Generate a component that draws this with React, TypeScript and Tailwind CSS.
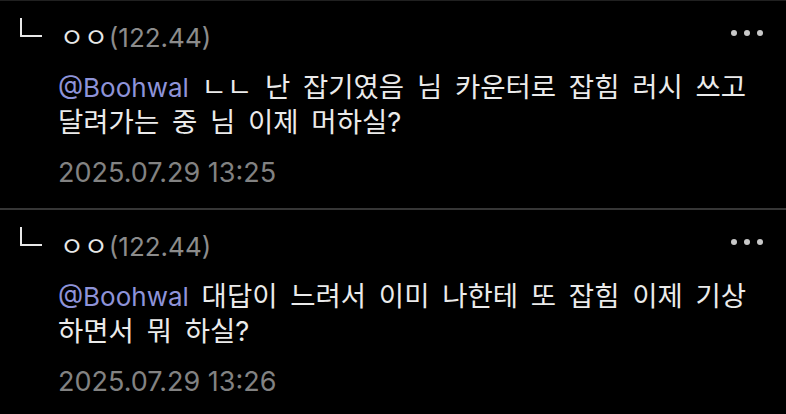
import React from "react";

const font = { fontFamily: '"Inter", "Noto Sans CJK KR", sans-serif' };

function Dots() {
  return (
    <div className="flex items-center gap-[7px]">
      <span className="block w-[6px] h-[6px] rounded-full bg-[#c8c8c8]" />
      <span className="block w-[6px] h-[6px] rounded-full bg-[#c8c8c8]" />
      <span className="block w-[6px] h-[6px] rounded-full bg-[#c8c8c8]" />
    </div>
  );
}

function ReplyMark() {
  return (
    <div className="w-[42px] h-[30px] flex items-start" aria-label="ㄴ">
      <div className="ml-[2px] -mt-[5px] w-[22px] h-[19px] border-l-[2.5px] border-b-[2.5px] border-[#e8e8e8] rounded-bl-[1px]" />
    </div>
  );
}

function Comment({ line1, line2, date }: { line1: string; line2: string; date: string }) {
  return (
    <div className="h-[207px] pt-[22px] pl-[18px] pr-[23px]">
      <div className="flex items-center justify-between h-[30px]">
        <div className="flex items-center h-[30px]">
          <ReplyMark />
          <span className="text-[26px] leading-[30px] text-[#e8e8e8]">ㅇㅇ</span>
          <span className="text-[26px] leading-[30px] text-[#8c8c8c] ml-[1px]">(122.44)</span>
        </div>
        <div className="-mt-[10px]">
          <Dots />
        </div>
      </div>
      <div className="pl-[40px] mt-[17px] text-[27.5px] leading-[35px] text-[#ebebeb] [word-spacing:5px]">
        <div>
          <span className="text-[26px] text-[#8e93d9] [word-spacing:0px]">@Boohwal</span> {line1}
        </div>
        <div>{line2}</div>
        <div className="mt-[15px] text-[27px] text-[#828282] [word-spacing:0px]">{date}</div>
      </div>
    </div>
  );
}

export default function App() {
  return (
    <div style={font} className="w-[786px] h-[414px] bg-black overflow-hidden border-t border-[#202020]">
      <Comment line1="ㄴㄴ 난 잡기였음 님 카운터로 잡힘 러시 쓰고" line2="달려가는 중 님 이제 머하실?" date="2025.07.29 13:25" />
      <div className="h-[2px] bg-[#363636]" />
      <Comment line1="대답이 느려서 이미 나한테 또 잡힘 이제 기상" line2="하면서 뭐 하실?" date="2025.07.29 13:26" />
    </div>
  );
}
